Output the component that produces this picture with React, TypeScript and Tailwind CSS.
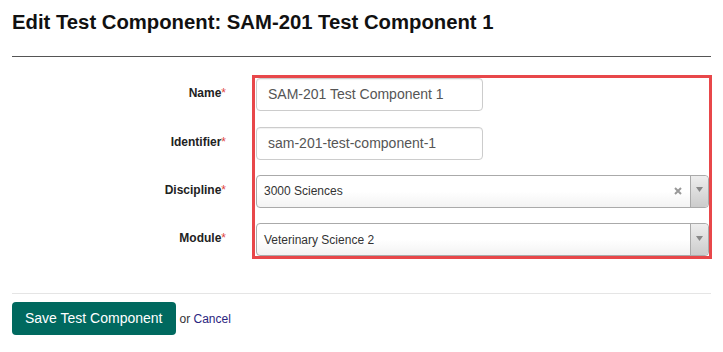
const FONT = { fontFamily: '"Liberation Sans", Arial, sans-serif' };

function Label({ text, className = "" }: { text: string; className?: string }) {
  return (
    <div className={`pt-[7px] text-right text-[12px] leading-[16px] font-bold text-[#222] ${className}`}>
      {text}
      <span className="font-normal text-[#e0463f]">*</span>
    </div>
  );
}

function TextInput({ value, className = "" }: { value: string; className?: string }) {
  return (
    <div
      className={`flex h-[33px] w-[227px] items-center rounded-[4px] border border-[#ccc] bg-white pl-[11px] text-[14px] text-[#555] shadow-[inset_0_1px_1px_rgba(0,0,0,0.06)] ${className}`}
    >
      {value}
    </div>
  );
}

function Arrow() {
  return (
    <div className="flex w-[18px] shrink-0 items-center justify-center rounded-r-[4px] border-l border-[#aaa] bg-gradient-to-t from-[#ccc] to-[#eee]">
      <svg width="7" height="5" viewBox="0 0 7 5" className="-mt-[3px]">
        <path d="M0 0h7L3.5 5z" fill="#888" />
      </svg>
    </div>
  );
}

function Select({ value, clear, className = "" }: { value: string; clear?: boolean; className?: string }) {
  return (
    <div
      className={`flex w-[453px] rounded-[4px] border border-[#aaa] bg-gradient-to-t from-[#f3f3f3] via-white to-white ${className}`}
    >
      <div className="flex flex-1 items-center pl-[7px] text-[12px] text-[#333]">{value}</div>
      {clear && (
        <div className="flex w-[24px] items-center justify-center">
          <svg width="8" height="8" viewBox="0 0 8 8">
            <path d="M1 1l6 6M7 1L1 7" stroke="#999" strokeWidth="2" />
          </svg>
        </div>
      )}
      <Arrow />
    </div>
  );
}

export default function App() {
  return (
    <div className="h-[352px] w-[723px] bg-white px-[12px]" style={FONT}>
      <h1 className="pt-[10px] text-[20.3px] leading-[24px] font-bold text-[#111]">
        Edit Test Component: SAM-201 Test Component 1
      </h1>
      <div className="mt-[22px] border-t border-[#555]" />

      <div className="mt-[21px] flex h-[178px]">
        <div className="flex w-[214px] flex-col">
          <Label text="Name" className="h-[33px]" />
          <Label text="Identifier" className="mt-[16px] h-[33px]" />
          <Label text="Discipline" className="mt-[15px] h-[34px]" />
          <Label text="Module" className="mt-[15px] h-[33px]" />
        </div>
        <div className="ml-[29px] flex h-[178px] w-[454px] flex-col pl-[1px] outline-[3px] outline-[#e8474a] outline-solid">
          <TextInput value="SAM-201 Test Component 1" />
          <TextInput value="sam-201-test-component-1" className="mt-[16px]" />
          <Select value="3000 Sciences" clear className="mt-[15px] h-[34px]" />
          <Select value="Veterinary Science 2" className="mt-[15px] h-[33px]" />
        </div>
      </div>

      <div className="mt-[37px] border-t border-[#e5e5e5]" />
      <div className="mt-[8px] flex items-center">
        <button className="h-[33px] rounded-[4px] bg-[#00695f] px-[13px] text-[14px] text-white">
          Save Test Component
        </button>
        <span className="ml-[4px] text-[12px] text-[#333]">
          or <span className="text-[#2a2580]">Cancel</span>
        </span>
      </div>
    </div>
  );
}
